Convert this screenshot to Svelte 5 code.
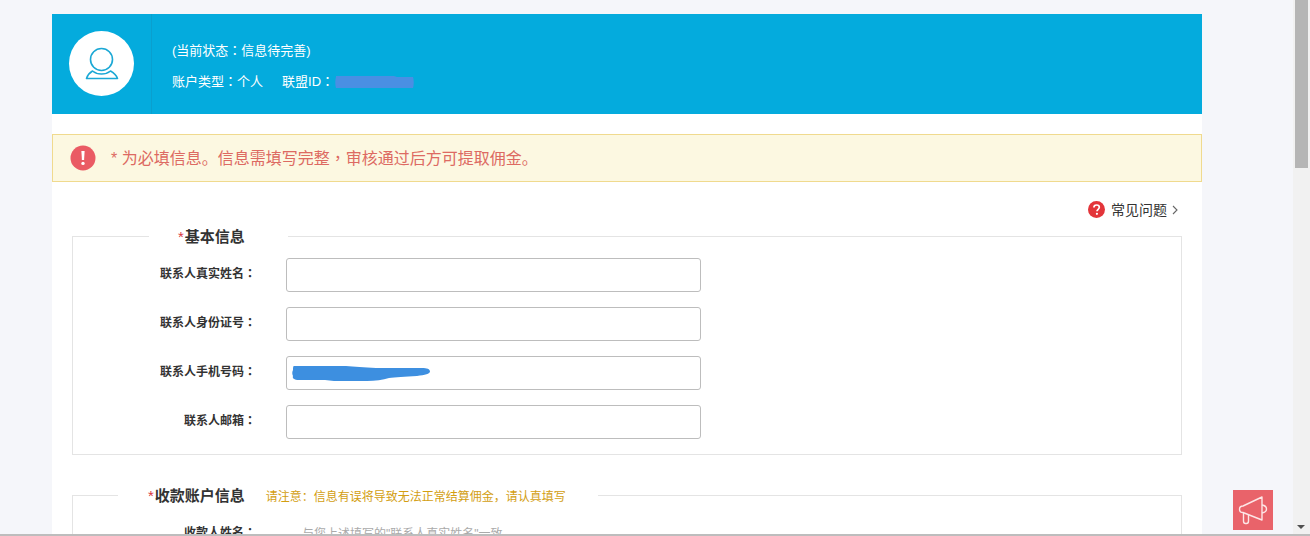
<script>
  const basicFields = [
    { label: '联系人真实姓名', scribble: false },
    { label: '联系人身份证号', scribble: false },
    { label: '联系人手机号码', scribble: true },
    { label: '联系人邮箱', scribble: false }
  ];
</script>

<div class="page">
  <main class="content">
    <header class="banner">
      <div class="avatar-cell">
        <div class="avatar">
          <svg width="36" height="36" viewBox="0 0 36 36" fill="none" stroke="#1ba8d5" stroke-width="1.6" stroke-linejoin="round">
            <circle cx="17.500" cy="13.500" r="11"></circle>
            <path d="M2.500 32.500h31c-1-3-3.500-5.500-7-7.500c-2.500 2-5.500 3-9 3s-6.500-1-9-3c-3.500 2-5 4.500-6 7.500z"></path>
          </svg>
        </div>
      </div>
      <div class="account">
        <p>(当前状态<span class="mid">：</span>信息待完善)</p>
        <p class="account-line">
          <span>账户类型<span class="mid">：</span>个人</span>
          <span class="union">联盟ID<span class="mid">：</span></span>
          <svg class="redact" width="81" height="16" viewBox="0 0 81 16">
            <path d="M2 2h58l3 1h16c1 3 1 8 0 11H2c-1-3-1-8 0-11z" fill="#4a8fe3"></path>
          </svg>
        </p>
      </div>
    </header>

    <div class="alert">
      <svg width="26" height="26" viewBox="0 0 26 26">
        <circle cx="13" cy="13" r="12.500" fill="#ea5b64"></circle>
        <path d="M11.400 6h3.200l-.5 9h-2.200z" fill="#fff"></path>
        <circle cx="13" cy="18.400" r="1.700" fill="#fff"></circle>
      </svg>
      <span class="alert-text">* 为必填信息。信息需填写完整<span class="mid">，</span>审核通过后方可提取佣金。</span>
    </div>

    <div class="help">
      <svg width="17" height="17" viewBox="0 0 17 17">
        <circle cx="8.500" cy="8.500" r="8.500" fill="#e3353a"></circle>
        <path d="M5.900 6.600c0-1.600 1.100-2.600 2.700-2.600s2.700.9 2.700 2.300c0 2-2.300 2-2.300 3.900" fill="none" stroke="#fff" stroke-width="1.700"></path>
        <circle cx="8.900" cy="12.800" r="1.100" fill="#fff"></circle>
      </svg>
      <span>常见问题</span>
      <svg width="6" height="10" viewBox="0 0 6 10" fill="none" stroke="#666" stroke-width="1.100">
        <polyline points="1,1 5,5 1,9"></polyline>
      </svg>
    </div>

    <fieldset class="group basic">
      <legend><i>*</i>基本信息</legend>
      {#each basicFields as field}
        <div class="row">
          <span class="label">{field.label}<span class="mid">：</span></span>
          <div class="input">
            {#if field.scribble}
              <svg class="scribble" width="140" height="17" viewBox="0 0 140 17">
                <path d="M3 1h52c8 1 18 1 30 2h46c5 0 8 1 8 3.500c0 2.500-5 3.500-13 4.500c-12 1-22 1-28 2c-6 2-14 3-22 3h-24c-6 0-12 0-18-1h-26c-5 0-7-2-6-4c-1-2-1-4 0-6c0-2 0-4 1-4z" fill="#3d8fe0"></path>
              </svg>
            {/if}
          </div>
        </div>
      {/each}
    </fieldset>

    <fieldset class="group account-group">
      <legend><i>*</i>收款账户信息<em>请注意：信息有误将导致无法正常结算佣金，请认真填写</em></legend>
      <div class="row">
        <span class="label">收款人姓名<span class="mid">：</span></span>
        <span class="hint">与您上述填写的"联系人真实姓名"一致</span>
      </div>
    </fieldset>
  </main>

  <button class="notice" aria-label="公告">
    <svg width="40" height="40" viewBox="0 0 40 40" fill="none" stroke="#fde6e6" stroke-width="1.400" stroke-linejoin="round">
      <path d="M29 7L10 16q-3.500 0-3.500 3.200t3.500 3.300L29 30z"></path>
      <path d="M29 15c3 .5 4.500 2.500 4.500 4s-1.500 3.500-4.500 4"></path>
      <path d="M10.500 23v8q0 2.500 2 2.500h1q2 0 2-2.500v-6.500"></path>
    </svg>
  </button>

  <div class="scrollbar" aria-hidden="true">
    <div class="thumb"></div>
    <span class="arrow"></span>
  </div>
  <div class="edge"></div>
</div>

<style>
  :global(body) {
    overflow: hidden;
    background: #f5f6fa;
  }

  .page {
    position: relative;
    height: 536px;
    overflow: hidden;
    padding-top: 14px;
    box-sizing: border-box;
    font-family: "Liberation Sans", "Noto Sans CJK SC", sans-serif;
  }

  .mid {
    font-family: "Noto Sans CJK TC", sans-serif;
  }

  .content {
    width: 1150px;
    margin-left: 52px;
    background: #fff;
    height: 600px;
  }

  .banner {
    display: flex;
    height: 100px;
    background: #04abdd;
    color: #fff;
    font-size: 13px;
  }

  .avatar-cell {
    display: flex;
    align-items: center;
    width: 82px;
    padding-left: 17px;
    border-right: 1px solid #0a9fce;
    height: 100px;
  }

  .avatar {
    display: flex;
    align-items: center;
    justify-content: center;
    flex: none;
    width: 65px;
    height: 65px;
    margin-top: -1px;
    border-radius: 50%;
    background: #fff;
  }

  .account {
    padding: 27px 0 0 20px;
  }

  .account p {
    margin: 0;
    line-height: 18px;
  }

  .account-line {
    display: flex;
    align-items: center;
    margin-top: 12px !important;
  }

  .union {
    margin-left: 19px;
  }

  .alert {
    display: flex;
    align-items: center;
    gap: 15px;
    height: 48px;
    box-sizing: border-box;
    margin-top: 20px;
    padding-left: 17px;
    border: 1px solid #f0da8e;
    background: #fcf8e1;
    color: #dd6a62;
    font-size: 16px;
  }

  .alert-text {
    margin-bottom: 2px;
  }

  .help {
    display: flex;
    align-items: center;
    justify-content: flex-end;
    gap: 5px;
    height: 17px;
    margin-top: 19px;
    padding-right: 24px;
    color: #333;
    font-size: 14px;
  }

  .help span {
    margin-bottom: 2px;
  }

  .help svg:first-child {
    margin-right: 1px;
  }

  .group {
    margin: 0 20px;
    padding: 0;
    border: 1px solid #e4e4e4;
    min-inline-size: 0;
  }

  .basic {
    margin-top: 7px;
    padding-bottom: 15px;
  }

  .account-group {
    margin-top: 29px;
    height: 60px;
  }

  legend {
    box-sizing: border-box;
    margin-left: 76px;
    width: 139px;
    padding-left: 29px;
    height: 22px;
    line-height: 24px;
    color: #333;
    font-size: 15px;
    font-weight: bold;
  }

  .account-group legend {
    margin-left: 45px;
    width: 480px;
    padding-left: 30px;
  }

  legend i {
    margin-right: 1px;
    color: #d9363e;
    font-style: normal;
    font-weight: normal;
  }

  legend em {
    margin-left: 21px;
    color: #d39e12;
    font-size: 12px;
    font-style: normal;
    font-weight: normal;
  }

  .row {
    display: flex;
    align-items: center;
    margin-top: 15px;
  }

  .basic .row:first-of-type {
    margin-top: 11px;
  }

  .account-group .row {
    margin-top: 17px;
  }

  .label {
    width: 183px;
    margin-right: 30px;
    padding-bottom: 5px;
    color: #333;
    font-size: 12px;
    font-weight: bold;
    text-align: right;
  }

  .input {
    position: relative;
    box-sizing: border-box;
    width: 415px;
    height: 34px;
    border: 1px solid #bdbdbd;
    border-radius: 3px;
    background: #fff;
  }

  .scribble {
    position: absolute;
    left: 4px;
    top: 8px;
  }

  .hint {
    margin-left: 16px;
    padding-bottom: 3px;
    color: #aaa;
    font-size: 12px;
  }

  .notice {
    position: absolute;
    left: 1233px;
    top: 490px;
    display: flex;
    align-items: center;
    justify-content: center;
    width: 40px;
    height: 40px;
    padding: 0;
    border: none;
    background: #e9636a;
  }

  .scrollbar {
    position: absolute;
    top: 0;
    right: 0;
    width: 17px;
    height: 536px;
    background: #f1f1f1;
  }

  .thumb {
    width: 13px;
    height: 168px;
    margin-left: 2px;
    background: #b5b5b5;
  }

  .arrow {
    position: absolute;
    left: 4px;
    top: 525px;
    border-left: 4px solid transparent;
    border-right: 4px solid transparent;
    border-top: 4px solid #505050;
  }

  .edge {
    position: absolute;
    left: 0;
    right: 0;
    bottom: 0;
    height: 2px;
    background: #bdbdbd;
  }
</style>
